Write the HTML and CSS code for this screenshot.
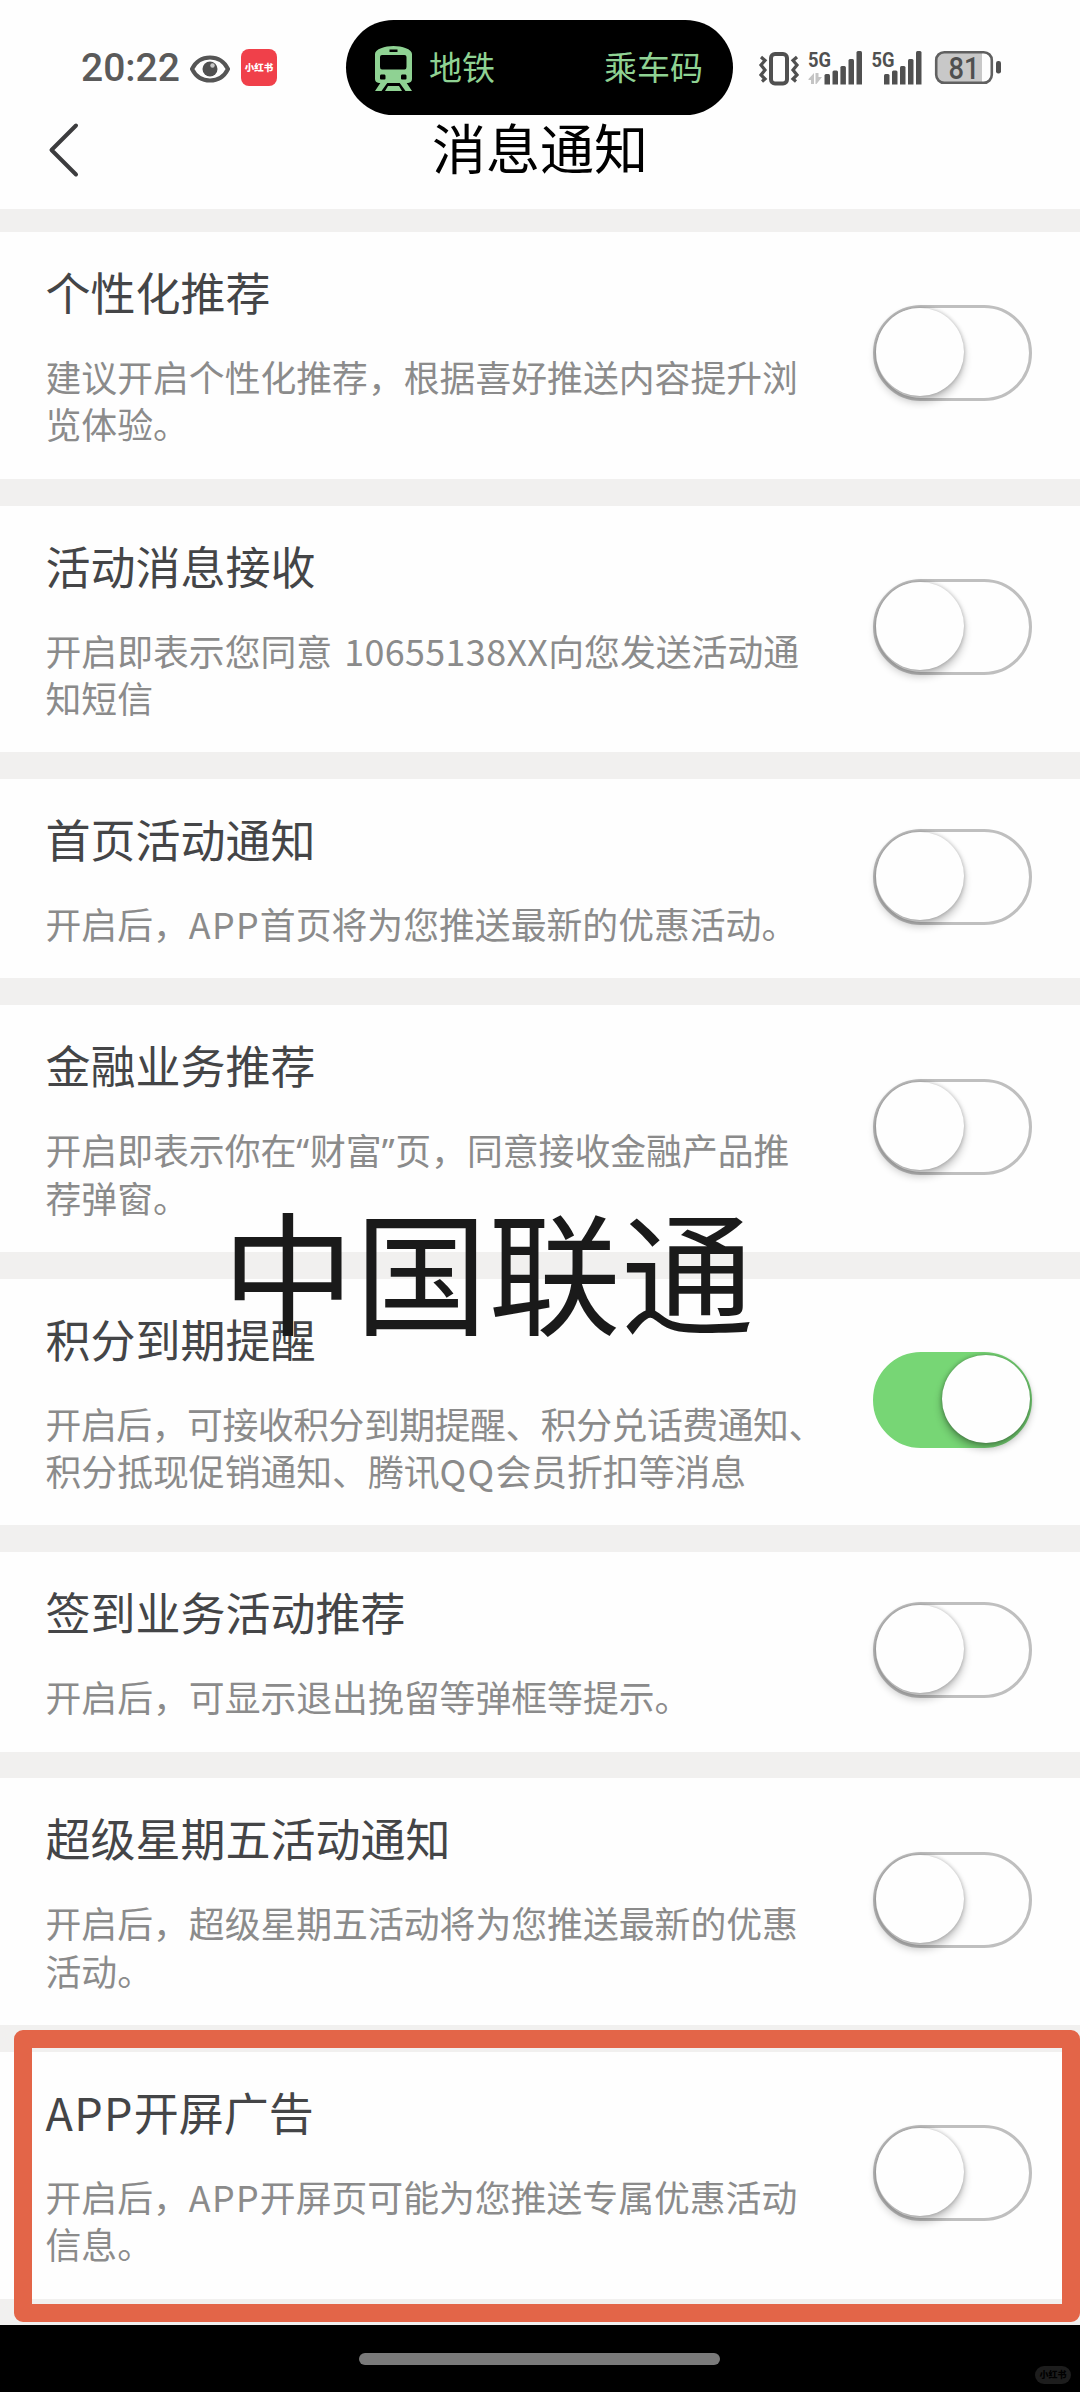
FILE: index.html
```html
<!DOCTYPE html>
<html lang="zh-CN">
<head>
<meta charset="utf-8">
<title>消息通知</title>
<link rel="stylesheet" href="styles.css">
</head>
<body>
<div class="screen">
  <header class="top">
    <div class="status">
      <div class="status-left">
        <span class="clock">20:22</span>
        <svg class="eye" width="40" height="28" viewBox="0 0 40 28"><path d="M2 14C6 6 13 2.500 20 2.500S34 6 38 14C34 22 27 25.500 20 25.500S6 22 2 14Z" fill="none" stroke="#555" stroke-width="4"/><circle cx="20" cy="14" r="7.500" fill="#505050"/><circle cx="22.500" cy="10.500" r="2.200" fill="#c8c8c8"/></svg>
        <span class="app-badge">小红书</span>
      </div>
      <div class="island">
        <svg width="37" height="45" viewBox="0 0 37 45"><path fill="#8fd293" fill-rule="evenodd" d="M0 8C0 3 10 0 18.500 0S37 3 37 8V33Q37 36.500 33 37H4Q0 36.500 0 33ZM14.500 3.500V6H22.500V3.500ZM7 9Q5 9 5 11V21Q5 23.500 7 23.500H29.500Q31.500 23.500 31.500 21V11Q31.500 9 29.500 9ZM6 28.500Q5 28.500 5 30V32.500Q5 33.500 6 33.500H9.500Q10.500 33.500 10.500 32.500V30Q10.500 28.500 9.500 28.500ZM27 28.500Q26 28.500 26 30V32.500Q26 33.500 27 33.500H30.500Q31.500 33.500 31.500 32.500V30Q31.500 28.500 30.500 28.500Z"/><path fill="#8fd293" d="M6 36H13L6.500 45H0ZM24 36H31L37 45H30.500ZM13 40H24L27 45H10Z"/></svg>
        <span class="island-name">地铁</span>
        <span class="island-action">乘车码</span>
      </div>
      <svg class="indicators" width="246" height="40" viewBox="757 48 246 40">
        <g fill="none" stroke="#505050">
          <rect x="771" y="54" width="16" height="29.500" rx="4" stroke-width="4"/>
          <path d="M761 57L765 60.500L761 65L765 70L761 75L765 79L762 81.500M797 57L793 60.500L797 65L793 70L797 75L793 79L796 81.500" stroke-width="3.200"/>
        </g>
        <g fill="#505050" class="net">
          <text x="808" y="67" textLength="23" lengthAdjust="spacingAndGlyphs">5G</text>
          <text x="871.500" y="67" textLength="23" lengthAdjust="spacingAndGlyphs">5G</text>
        </g>
        <path fill="#c4c4c4" d="M808.500 79L814 73V84H811V80H808.500ZM815.500 73H818.500V77H822L816.500 84H815.500Z"/>
        <g fill="#505050">
          <rect x="824.500" y="74" width="5.500" height="13" rx="1.500"/><rect x="832.500" y="70.500" width="5.500" height="16.500" rx="1.500"/><rect x="840.400" y="66" width="5.500" height="21" rx="1.500"/><rect x="848.500" y="59" width="5.500" height="28" rx="1.500"/><rect x="856.500" y="51" width="5.500" height="36" rx="1.500"/>
          <rect x="884" y="74" width="5.500" height="13" rx="1.500"/><rect x="892" y="70.500" width="5.500" height="16.500" rx="1.500"/><rect x="900" y="66" width="5.500" height="21" rx="1.500"/><rect x="908" y="59" width="5.500" height="28" rx="1.500"/><rect x="916" y="51" width="5.500" height="36" rx="1.500"/>
          <rect x="996" y="61" width="5" height="12.500" rx="2.200"/>
        </g>
        <path fill="#fefefe" d="M823 84.500H923V88H823Z"/>
        <path fill="#c8c8c8" d="M945 52H982V83H945Q936 83 936 74V61Q936 52 945 52Z"/>
        <rect x="936.200" y="52.200" width="55.600" height="30.600" rx="8" fill="none" stroke="#606060" stroke-width="2.600"/>
        <text class="charge" x="948.500" y="78.500" textLength="31" lengthAdjust="spacingAndGlyphs">81</text>
      </svg>
    </div>
    <div class="titlebar">
      <svg class="back" width="32" height="56" viewBox="0 0 32 56"><path d="M28 3.500L3.500 28L28 52.500" fill="none" stroke="#3c3c3e" stroke-width="4" stroke-linecap="round" stroke-linejoin="round"/></svg>
      <h1>消息通知</h1>
    </div>
  </header>

  <main class="list">
    <section class="item">
      <div class="copy"><h2>个性化推荐</h2><p>建议开启个性化推荐，根据喜好推送内容提升浏<br>览体验。</p></div>
      <span class="switch"></span>
    </section>
    <section class="item">
      <div class="copy"><h2>活动消息接收</h2><p>开启即表示您同意 <span class="number">10655138XX</span>向您发送活动通<br>知短信</p></div>
      <span class="switch"></span>
    </section>
    <section class="item">
      <div class="copy"><h2>首页活动通知</h2><p>开启后，<span class="latin">APP</span>首页将为您推送最新的优惠活动。</p></div>
      <span class="switch"></span>
    </section>
    <section class="item">
      <div class="copy"><h2>金融业务推荐</h2><p>开启即表示你在<span class="quote">“</span>财富<span class="quote">”</span>页，同意接收金融产品推<br>荐弹窗。</p></div>
      <span class="switch"></span>
    </section>
    <section class="item">
      <div class="copy"><h2>积分到期提醒</h2><p><span class="tight">开启后，可接收积分到期提醒、积分兑话费通知、</span><br>积分抵现促销通知、腾讯<span class="latin">QQ</span>会员折扣等消息</p></div>
      <span class="switch on"></span>
      <div class="caption">中国联通</div>
    </section>
    <section class="item">
      <div class="copy"><h2>签到业务活动推荐</h2><p>开启后，可显示退出挽留等弹框等提示。</p></div>
      <span class="switch"></span>
    </section>
    <section class="item">
      <div class="copy"><h2>超级星期五活动通知</h2><p>开启后，超级星期五活动将为您推送最新的优惠<br>活动。</p></div>
      <span class="switch"></span>
    </section>
    <section class="item">
      <div class="copy"><h2><span class="latin">APP</span>开屏广告</h2><p>开启后，<span class="latin">APP</span>开屏页可能为您推送专属优惠活动<br>信息。</p></div>
      <span class="switch"></span>
      <div class="highlight"></div>
    </section>
  </main>

  <footer class="navbar">
    <span class="home"></span>
    <span class="mark">小红书</span>
  </footer>
</div>
</body>
</html>
```
FILE: styles.css
```css
* { box-sizing: border-box; }
body { margin: 0; background: #f1f0ef; font-family: "Noto Sans CJK SC", sans-serif; }
h1, h2, p { margin: 0; font-weight: 400; }
svg { display: block; flex: none; }

.screen { width: 1080px; height: 2392px; display: flex; flex-direction: column; overflow: hidden; background: #f1f0ef; }

.top { height: 209px; background: #fefefe; flex: none; }
.status { height: 115px; padding: 20px 77px 0 81px; display: flex; }
.status-left { width: 265px; height: 95px; display: flex; align-items: center; }
.clock { width: 109px; font: 500 39px/46px Roboto, sans-serif; color: #5a5a5a; padding-top: 1px; }
.eye { margin-top: 3px; }
.app-badge { width: 36px; height: 37px; margin-left: 11px; border-radius: 8px; background: #f0404a; color: #fff; font-size: 9.500px; font-weight: 900; line-height: 36px; text-align: center; white-space: nowrap; }
.island { width: 387px; height: 95px; padding: 0 30px 0 29px; border-radius: 48px; background: #000; display: flex; align-items: center; color: #8fd293; font-size: 33px; line-height: 48px; }
.island svg { margin-top: 1px; }
.island-name { margin: -3px 0 0 17px; }
.island-action { margin: -3px 0 0 auto; }
.indicators { margin: 28px 0 0 24px; }
.net { font: 700 21px Roboto, sans-serif; }
.charge { font: 500 31px Roboto, sans-serif; fill: #505050; }
.titlebar { height: 70px; display: grid; grid-template-columns: 110px 1fr 110px; align-items: center; }
.back { margin-left: 48px; }
h1 { margin-top: -6px; font-size: 54px; line-height: 64px; text-align: center; color: #000; }

.list { flex: none; padding-top: 23px; display: flex; flex-direction: column; gap: 26.700px; height: 2116px; }
.item { position: relative; flex: none; display: flex; align-items: center; justify-content: space-between; padding: 28px 48px 32px 45.500px; background: #fefefe; }
h2 { padding-top: 2px; font-size: 45px; line-height: 60px; color: #444547; white-space: nowrap; }
p { margin-top: 31px; margin-bottom: -1px; font-size: 35.850px; line-height: 47.400px; color: #8b8b8b; white-space: nowrap; }
.number { margin-left: 4px; letter-spacing: .4px; }
.latin { letter-spacing: 1.300px; }
.quote { font-family: "Noto Sans", sans-serif; line-height: 1; letter-spacing: .8px; }
.tight { letter-spacing: -.45px; }

.switch { flex: none; width: 159px; height: 96px; padding: 1px; border: 3px solid #bfbfbf; border-radius: 48px; }
.switch::before { content: ""; display: block; width: 88px; height: 88px; border-radius: 50%; background: #fefefe; box-shadow: 0 6px 8px rgba(0, 0, 0, .24), 0 0 4px rgba(0, 0, 0, .26); margin: -1px; }
.switch.on { background: #77d675; border-color: #77d675; }
.switch.on::before { margin-left: 65px; box-shadow: 0 5px 8px rgba(0, 0, 0, .32), 0 0 4px rgba(0, 0, 0, .3); }

.caption { position: absolute; left: 222px; top: -107px; font-size: 132.500px; line-height: 190px; letter-spacing: .6px; color: #1a1a1a; white-space: nowrap; }
.highlight { position: absolute; left: 14px; top: -22px; width: 1066px; height: 292px; border: 18px solid #e36548; border-radius: 9px; }

.navbar { position: relative; flex: 1; padding-top: 28px; background: #000; }
.home { display: block; width: 361px; height: 12px; margin-left: 359px; border-radius: 6px; background: #7a7a7a; }
.mark { position: absolute; right: 9px; top: 41px; width: 36px; height: 18px; border-radius: 9px; background: #1d1d1d; color: #000; font-size: 9px; font-weight: 900; line-height: 17px; text-align: center; white-space: nowrap; }
```
